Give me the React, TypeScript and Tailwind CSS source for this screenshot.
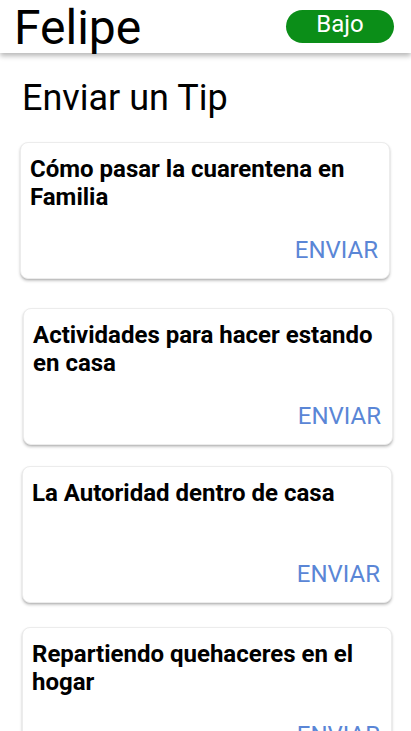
import React from 'react';

type Tip = {
  title: string;
  className: string;
};

const tips: Tip[] = [
  { title: 'Cómo pasar la cuarentena en Familia', className: 'mt-[24px] ml-[20px]' },
  { title: 'Actividades para hacer estando en casa', className: 'mt-[29px] ml-[23px]' },
  { title: 'La Autoridad dentro de casa', className: 'mt-[21px] ml-[22px]' },
  { title: 'Repartiendo quehaceres en el hogar', className: 'mt-[24px] ml-[22px]' },
];

const TipCard: React.FC<{ tip: Tip }> = ({ tip }) => (
  <div
    className={`${tip.className} w-[370px] h-[137px] shrink-0 flex flex-col bg-white rounded-lg border border-[#ececec] shadow-[0_2px_3px_rgba(0,0,0,0.22),0_1px_1px_rgba(0,0,0,0.08)]`}
  >
    <h3 className="px-[9px] pt-[12px] text-[24px] leading-[28px] font-bold text-black">
      {tip.title}
    </h3>
    <div className="mt-auto pr-[11px] pb-[13px] text-right">
      <button className="text-[24px] leading-[26px] text-[#5a86d6]">ENVIAR</button>
    </div>
  </div>
);

const App: React.FC = () => {
  return (
    <div className="w-[411px] h-[731px] overflow-hidden bg-white font-['Roboto',sans-serif]">
      {/* Top bar */}
      <header className="relative z-10 h-[53px] flex justify-between items-start bg-white shadow-[0_3px_5px_rgba(0,0,0,0.28)]">
        <h1 className="ml-[14px] mt-[4px] text-[48px] leading-[48px] text-black">Felipe</h1>
        <span className="mr-[17px] mt-[10px] w-[108px] h-[33px] flex items-center justify-center rounded-full bg-[#0b8e18] text-white text-[24px] leading-none pb-[5px]">
          Bajo
        </span>
      </header>

      <h2 className="mt-[25px] pl-[22px] text-[36px] leading-[40px] text-black">Enviar un Tip</h2>

      <div className="flex flex-col">
        {tips.map((tip) => (
          <TipCard key={tip.title} tip={tip} />
        ))}
      </div>
    </div>
  );
};

export default App;
